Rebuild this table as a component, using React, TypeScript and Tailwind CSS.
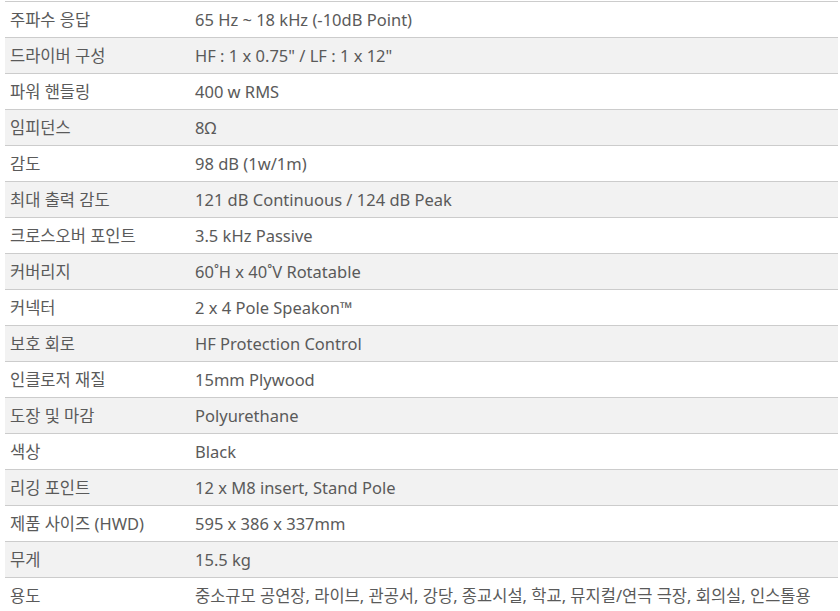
import React from 'react';

const specs: [string, string][] = [
  ['주파수 응답', '65 Hz ~ 18 kHz (-10dB Point)'],
  ['드라이버 구성', 'HF : 1 x 0.75" / LF : 1 x 12"'],
  ['파워 핸들링', '400 w RMS'],
  ['임피던스', '8Ω'],
  ['감도', '98 dB (1w/1m)'],
  ['최대 출력 감도', '121 dB Continuous / 124 dB Peak'],
  ['크로스오버 포인트', '3.5 kHz Passive'],
  ['커버리지', '60˚H x 40˚V Rotatable'],
  ['커넥터', '2 x 4 Pole Speakon™'],
  ['보호 회로', 'HF Protection Control'],
  ['인클로저 재질', '15mm Plywood'],
  ['도장 및 마감', 'Polyurethane'],
  ['색상', 'Black'],
  ['리깅 포인트', '12 x M8 insert, Stand Pole'],
  ['제품 사이즈 (HWD)', '595 x 386 x 337mm'],
  ['무게', '15.5 kg'],
  ['용도', '중소규모 공연장, 라이브, 관공서, 강당, 종교시설, 학교, 뮤지컬/연극 극장, 회의실, 인스톨용'],
];

export default function App() {
  return (
    <div className="w-[840px] h-[611px] overflow-hidden bg-white pt-px">
      <div
        className="ml-[5px] w-[833px] text-[16.5px] text-[#5a5a5a]"
        style={{ fontFamily: '"Noto Sans", "Noto Sans CJK KR", sans-serif' }}
      >
        {specs.map(([label, value], i) => (
          <div
            key={label}
            className={`flex h-[36px] items-center border-t border-[#ccc] pt-[2px] ${
              i % 2 === 1 ? 'bg-[#f2f2f2]' : 'bg-white'
            }`}
          >
            <div className="w-[190px] shrink-0 pl-[5px]">{label}</div>
            <div className="whitespace-nowrap">{value}</div>
          </div>
        ))}
      </div>
    </div>
  );
}
